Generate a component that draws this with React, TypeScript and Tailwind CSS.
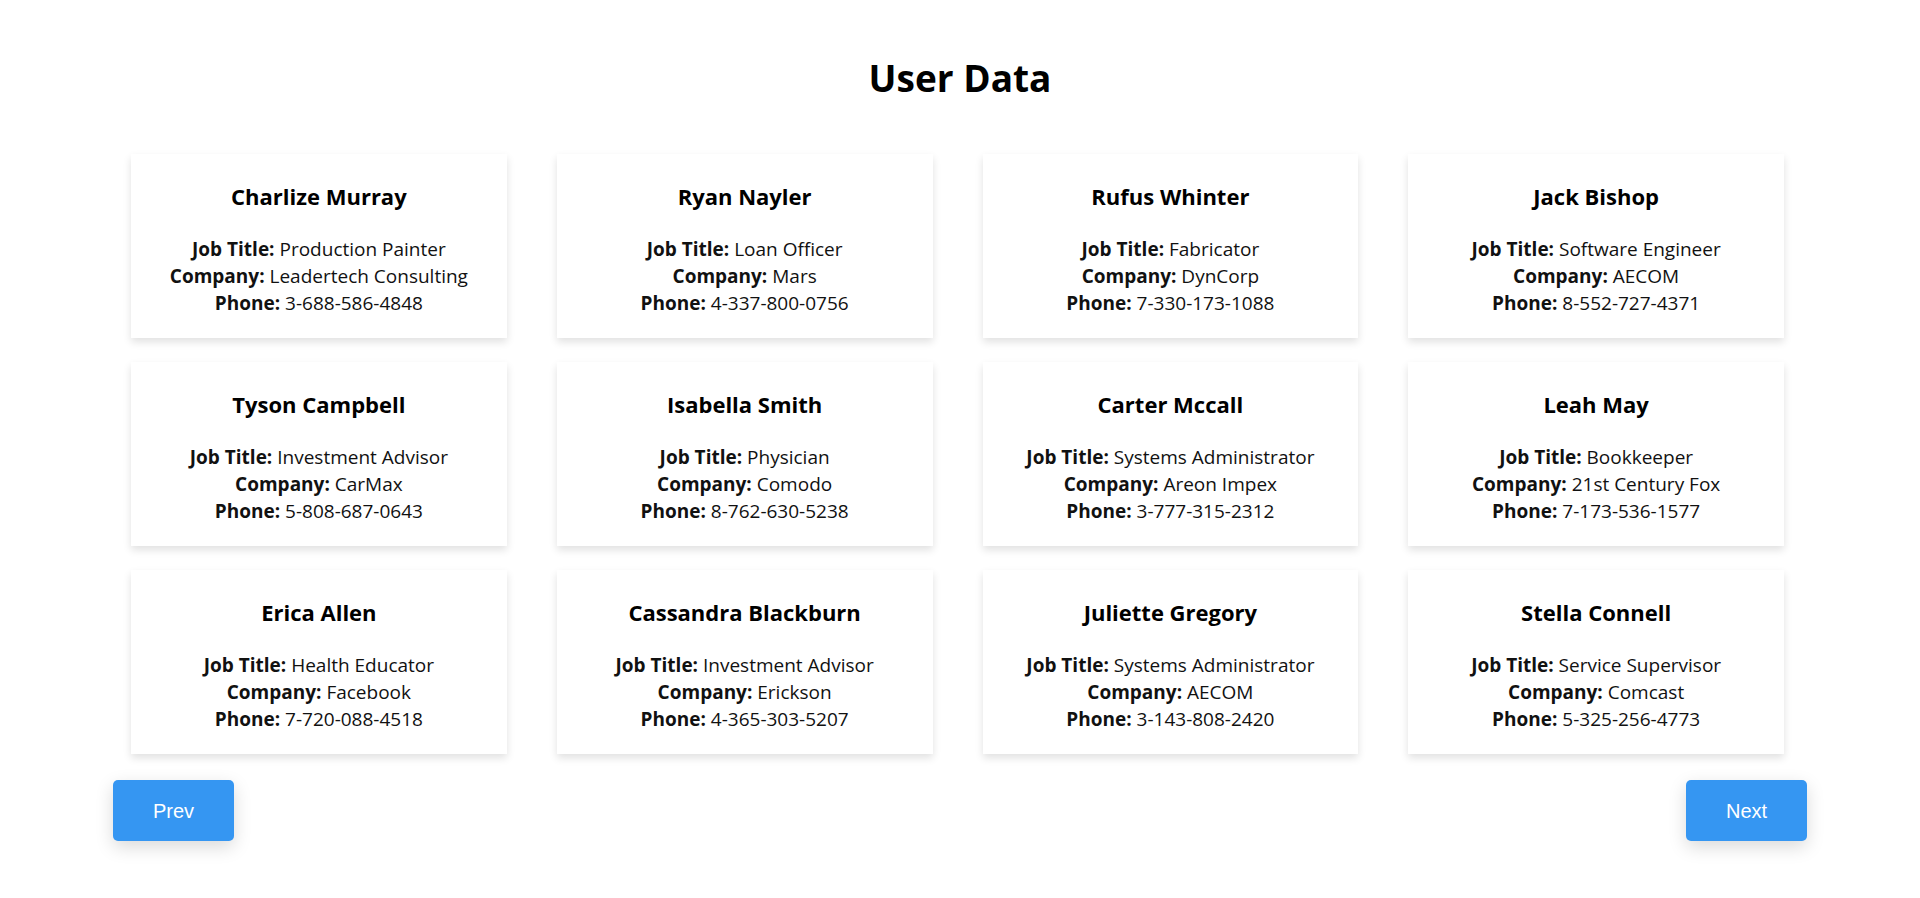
import React from "react";

type User = { name: string; job: string; company: string; phone: string };

const users: User[] = [
  { name: "Charlize Murray", job: "Production Painter", company: "Leadertech Consulting", phone: "3-688-586-4848" },
  { name: "Ryan Nayler", job: "Loan Officer", company: "Mars", phone: "4-337-800-0756" },
  { name: "Rufus Whinter", job: "Fabricator", company: "DynCorp", phone: "7-330-173-1088" },
  { name: "Jack Bishop", job: "Software Engineer", company: "AECOM", phone: "8-552-727-4371" },
  { name: "Tyson Campbell", job: "Investment Advisor", company: "CarMax", phone: "5-808-687-0643" },
  { name: "Isabella Smith", job: "Physician", company: "Comodo", phone: "8-762-630-5238" },
  { name: "Carter Mccall", job: "Systems Administrator", company: "Areon Impex", phone: "3-777-315-2312" },
  { name: "Leah May", job: "Bookkeeper", company: "21st Century Fox", phone: "7-173-536-1577" },
  { name: "Erica Allen", job: "Health Educator", company: "Facebook", phone: "7-720-088-4518" },
  { name: "Cassandra Blackburn", job: "Investment Advisor", company: "Erickson", phone: "4-365-303-5207" },
  { name: "Juliette Gregory", job: "Systems Administrator", company: "AECOM", phone: "3-143-808-2420" },
  { name: "Stella Connell", job: "Service Supervisor", company: "Comcast", phone: "5-325-256-4773" },
];

function Card({ u }: { u: User }) {
  return (
    <div className="bg-white text-center pt-[24px] pb-[21px] shadow-[0_4px_8px_rgba(0,0,0,0.12)]">
      <h2 className="text-[22px] leading-[36px] font-bold text-black">{u.name}</h2>
      <div className="mt-[22px] text-[19px] leading-[27px] text-[#111]">
        <p>
          <span className="font-bold">Job Title:</span> {u.job}
        </p>
        <p>
          <span className="font-bold">Company:</span> {u.company}
        </p>
        <p>
          <span className="font-bold">Phone:</span> {u.phone}
        </p>
      </div>
    </div>
  );
}

export default function App() {
  return (
    <div
      className="min-h-screen bg-white px-[113px] pt-[54px]"
      style={{ fontFamily: '"Segoe UI", "Open Sans", "Noto Sans", sans-serif' }}
    >
      <h1 className="text-center text-[37px] leading-[48px] font-bold text-black">User Data</h1>
      <div className="mt-[52px] pl-[18px] pr-[23px] grid grid-cols-4 gap-x-[50px] gap-y-[24px]">
        {users.map((u) => (
          <Card key={u.name} u={u} />
        ))}
      </div>
      <div className="mt-[26px] flex justify-between">
        <button
          className="w-[121px] h-[61px] rounded-[5px] bg-[#3596f2] text-white text-[20px] shadow-[0_6px_18px_rgba(0,0,0,0.15)]"
          style={{ fontFamily: '"Liberation Sans", Arial, sans-serif' }}
        >
          Prev
        </button>
        <button
          className="w-[121px] h-[61px] rounded-[5px] bg-[#3596f2] text-white text-[20px] shadow-[0_6px_18px_rgba(0,0,0,0.15)]"
          style={{ fontFamily: '"Liberation Sans", Arial, sans-serif' }}
        >
          Next
        </button>
      </div>
    </div>
  );
}
